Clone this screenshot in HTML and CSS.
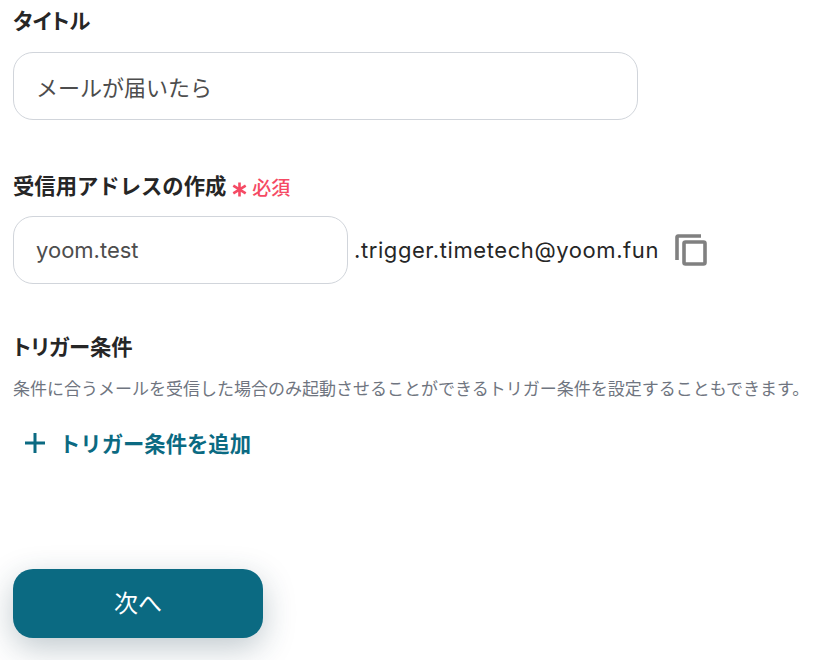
FILE: index.html
```html
<!DOCTYPE html>
<html lang="ja">
<head>
  <meta charset="UTF-8" />
  <title>トリガー設定</title>
  <link rel="stylesheet" href="styles.css">
</head>
<body>
  <section class="field field-title">
    <label class="label label-tight">タイトル</label>
    <input class="input input-wide" value="メールが届いたら">
  </section>

  <section class="field field-address">
    <div class="label-row">
      <label class="label">受信用アドレスの作成</label>
      <span class="required">
        <svg class="star" width="15" height="15" viewBox="0 0 15 15" stroke="#f54a64" stroke-width="2.600" fill="none">
          <path d="M7.500 0.500V14.500M1.300 3.600L13.700 11.400M13.700 3.600L1.300 11.400"/>
        </svg>
        必須
      </span>
    </div>
    <div class="address-row">
      <input class="input input-short" value="yoom.test">
      <span class="suffix">.trigger.timetech@yoom.fun</span>
      <svg class="copy-icon" width="32" height="32" viewBox="0 0 32 32" fill="none" stroke="#808080" stroke-width="3.600">
        <path d="M2 26V3a1 1 0 0 1 1-1h23"/>
        <rect x="9" y="8" width="21" height="22" rx="1.500"/>
      </svg>
    </div>
  </section>

  <section class="field field-trigger">
    <div class="label label-tight">トリガー条件</div>
    <p class="hint">条件に合うメールを受信した場合のみ起動させることができるトリガー条件を設定することもできます。</p>
    <div class="add-row">
      <svg width="20" height="20" viewBox="0 0 20 20" stroke="#0b6a82" stroke-width="3" fill="none"><path d="M10 0V20M0 10H20"/></svg>
      <span>トリガー条件を追加</span>
    </div>
  </section>

  <button class="next">次へ</button>
</body>
</html>
```

FILE: styles.css
```css
body { margin: 0; padding: 0 13px; background: #fff; color: #262626; font-family: Inter, "Noto Sans CJK JP", sans-serif; height: 660px; overflow: hidden; box-sizing: border-box; }
.field { display: flex; flex-direction: column; }
.field-title { padding-top: 6px; }
.field-address { padding-top: 51px; }
.field-trigger { padding-top: 48px; }
.label { font-size: 21.330px; font-weight: 700; line-height: 30px; }
.label-tight { font-feature-settings: "palt"; }
.label-row { display: flex; align-items: center; gap: 6px; }
.required { color: #f54a64; font-size: 19px; font-weight: 500; display: flex; align-items: center; gap: 5px; padding-top: 1px; }
.star { margin-top: 5px; }
.input { box-sizing: border-box; height: 68px; border: 1px solid #d1d5db; border-radius: 20px; padding: 0 22px; font: 400 22px Inter, "Noto Sans CJK JP", sans-serif; color: #4d4d4d; outline: none; }
.input-wide { width: 625px; margin-top: 16px; }
.input-short { width: 335px; }
.address-row { display: flex; align-items: center; margin-top: 15px; }
.suffix { font-size: 22px; margin-left: 6px; letter-spacing: 0.580px; }
.copy-icon { margin-left: 16px; }
.hint { margin: 14px 0 0; font-size: 17px; line-height: 26px; color: #6f7580; white-space: nowrap; }
.add-row { display: flex; align-items: center; gap: 14px; margin-top: 25px; padding-left: 12px; color: #0b6a82; font-size: 21.330px; font-weight: 700; }
.next { display: block; margin-top: 111px; width: 250px; height: 69px; padding: 0 0 4px; border: 0; border-radius: 20px; background: #0b6a82; color: #fff; font: 400 24px Inter, "Noto Sans CJK JP", sans-serif; box-shadow: 0 10px 32px rgba(30, 60, 80, 0.28); }
```
